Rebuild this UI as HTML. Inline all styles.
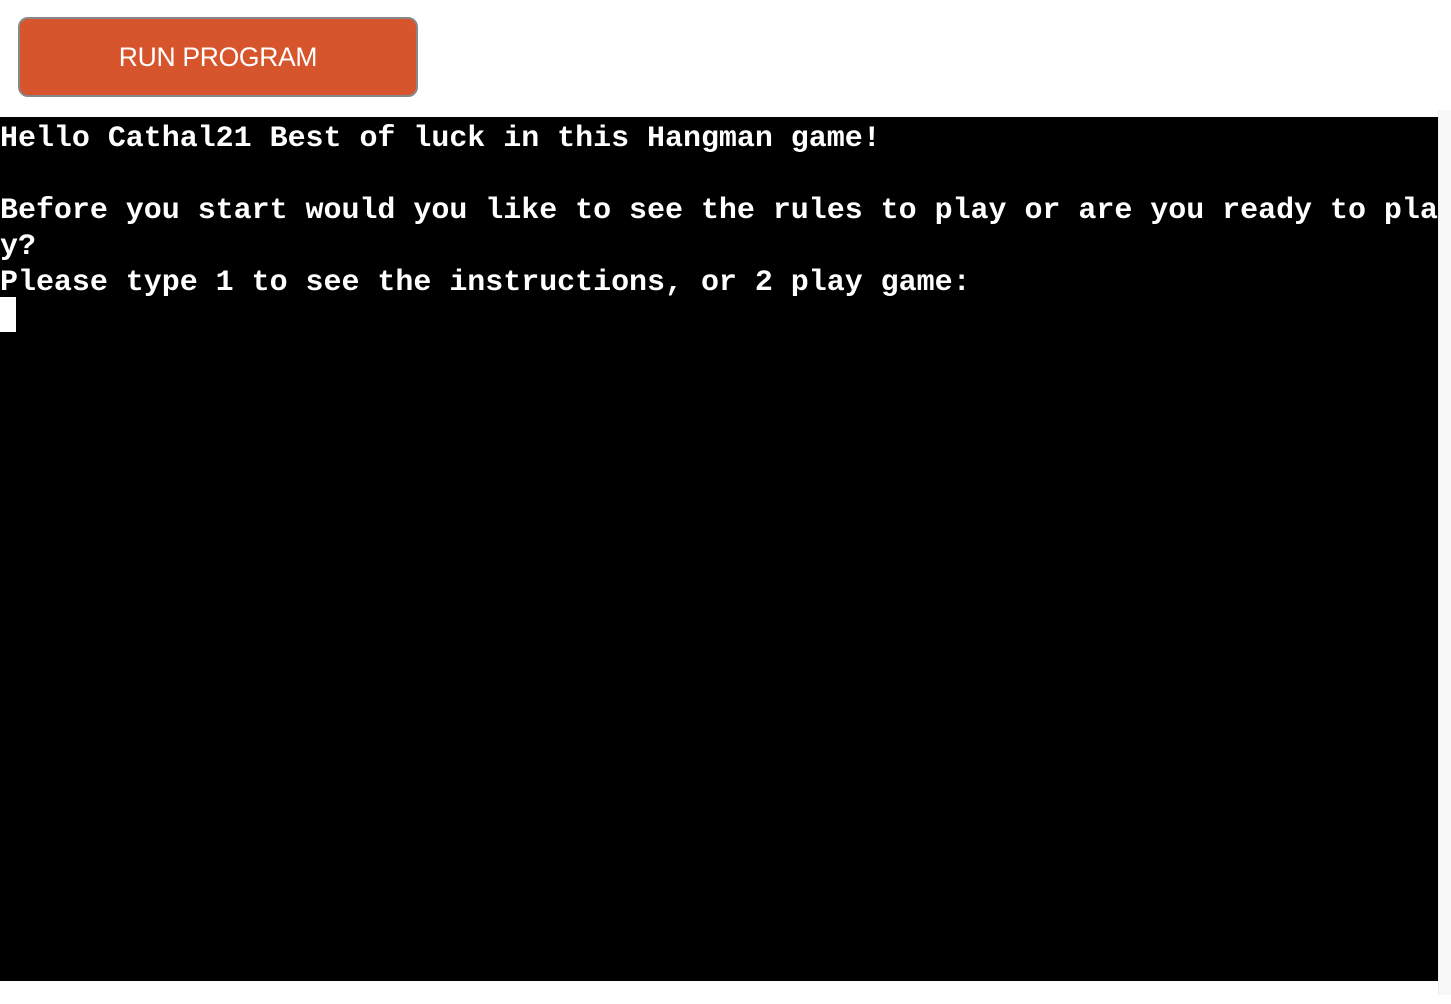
<!DOCTYPE html>
<html><head><style>
html,body{margin:0;padding:0;background:#fff;width:1451px;height:1004px;overflow:hidden;position:relative}
.btn{position:absolute;left:18px;top:17px;width:396px;height:76px;background:#d7552c;border:2px solid #888;border-radius:10px;color:#fff;font:26.5px "Liberation Sans",sans-serif;letter-spacing:-0.3px;display:flex;align-items:center;justify-content:center;box-sizing:content-box}
.sb{position:absolute;left:1438px;top:110px;width:13px;height:885px;background:#f8f8f8;border-left:1px solid #eee}
.term{position:absolute;left:0;top:117px;width:1438px;height:864px;background:#000;overflow:hidden}
pre{margin:0;padding-top:4px;color:#fff;font:bold 30px/36px "Liberation Mono",monospace;white-space:pre;letter-spacing:-0.03px}
.cur{position:absolute;left:0;top:180px;width:16px;height:35px;background:#fff}
</style></head><body>
<div class="btn">RUN PROGRAM</div>
<div class="sb"></div>
<div class="term"><pre>Hello Cathal21 Best of luck in this Hangman game!

Before you start would you like to see the rules to play or are you ready to pla
y?
Please type 1 to see the instructions, or 2 play game:</pre><div class="cur"></div></div>
</body></html>
